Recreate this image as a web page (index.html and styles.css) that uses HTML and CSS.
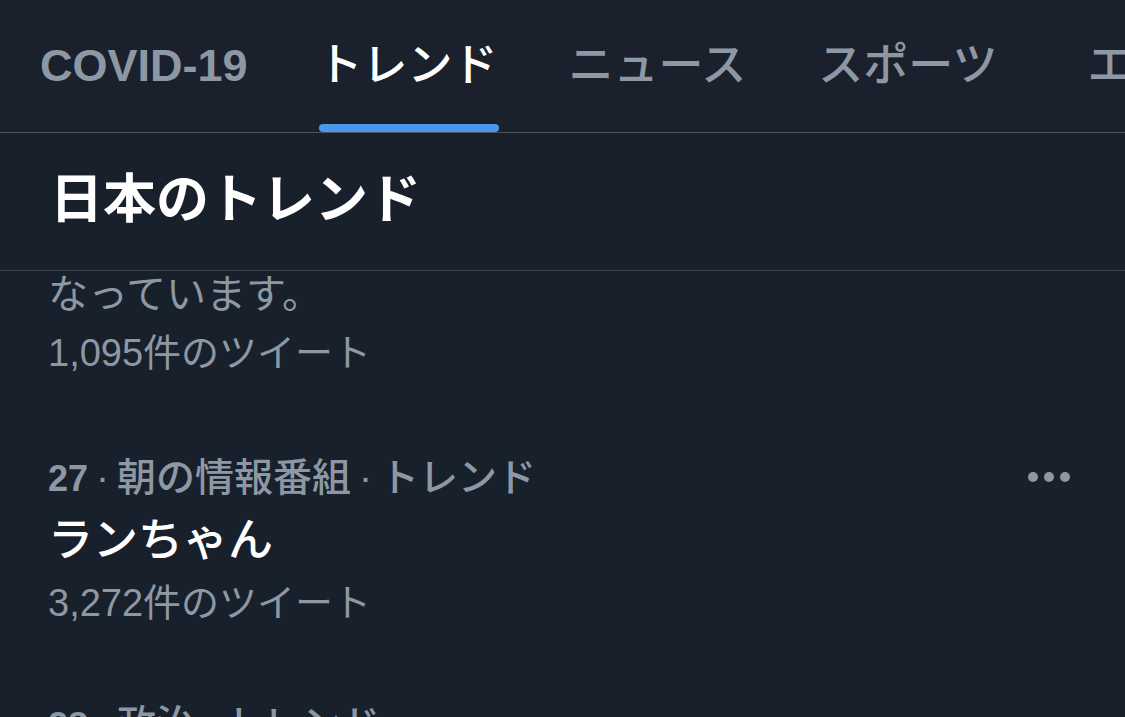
FILE: index.html
```html
<!DOCTYPE html>
<html lang="ja">
<head>
<meta charset="utf-8">
<title>トレンド</title>
<link rel="stylesheet" href="styles.css">
</head>
<body>
<div class="screen">
  <nav class="tabs">
    <div class="tab tab-latin">COVID-19</div>
    <div class="tab tab-active">トレンド<span class="indicator"></span></div>
    <div class="tab">ニュース</div>
    <div class="tab">スポーツ</div>
    <div class="tab tab-wide">エンタメ</div>
  </nav>
  <header class="section-head">
    <h1 class="section-title">日本のトレンド</h1>
  </header>
  <main class="list">
    <div class="trend trend-cut">
      <div class="desc">なっています。</div>
      <div class="count">1,095件のツイート</div>
    </div>
    <div class="trend">
      <div class="meta-row">
        <div class="meta"><span class="rank">27</span><span class="sep">·</span>朝の情報番組<span class="sep">·</span>トレンド</div>
        <div class="more"><span></span><span></span><span></span></div>
      </div>
      <div class="name">ランちゃん</div>
      <div class="count">3,272件のツイート</div>
    </div>
    <div class="trend">
      <div class="meta-row">
        <div class="meta"><span class="rank">28</span><span class="sep">·</span>政治<span class="sep">·</span>トレンド</div>
        <div class="more"><span></span><span></span><span></span></div>
      </div>
      <div class="name">サンプル</div>
    </div>
  </main>
</div>
</body>
</html>
```

FILE: styles.css
```css
* { box-sizing: border-box; margin: 0; padding: 0; }
html, body {
  width: 1125px;
  height: 717px;
  overflow: hidden;
  background: #18202b;
}
body {
  font-family: "Liberation Sans", "Noto Sans CJK JP", sans-serif;
  color: #ffffff;
}
.screen {
  display: flex;
  flex-direction: column;
  height: 717px;
  overflow: hidden;
}
.tabs {
  display: flex;
  flex-wrap: nowrap;
  height: 133px;
  padding-left: 5px;
  border-bottom: 1px solid #4a525c;
  background: #1a212c;
  overflow: hidden;
  flex-shrink: 0;
}
.tab {
  position: relative;
  flex-shrink: 0;
  padding: 38px 36px 0;
  font-size: 45px;
  line-height: 56px;
  font-weight: 500;
  color: #8d98a4;
  white-space: nowrap;
}
.tab-latin { font-weight: 700; padding-left: 35px; padding-right: 35px; }
.tab-active { color: #ffffff; padding-left: 35px; padding-right: 35px; }
.tab-wide { padding-left: 54px; }
.indicator {
  position: absolute;
  left: 36px;
  right: 34px;
  bottom: 0;
  height: 8px;
  border-radius: 4px;
  background: #4a99e9;
}
.section-head {
  height: 138px;
  display: flex;
  align-items: center;
  padding-left: 50px;
  border-bottom: 1px solid #3b444e;
  flex-shrink: 0;
}
.section-title {
  font-size: 53px;
  font-weight: 700;
  line-height: 60px;
  margin-top: -4px;
}
.list {
  display: flex;
  flex-direction: column;
}
.trend {
  padding: 0 48px 62px 48px;
  display: flex;
  flex-direction: column;
}
.trend-cut { margin-top: -6px; padding-bottom: 65px; }
.desc {
  font-size: 40px;
  line-height: 58px;
  color: #8d98a4;
}
.count {
  font-size: 38px;
  line-height: 60px;
  color: #8d98a4;
}
.meta-row {
  display: flex;
  justify-content: space-between;
  align-items: center;
}
.meta {
  font-size: 39px;
  line-height: 60px;
  font-weight: 500;
  color: #8d98a4;
}
.rank { font-weight: 700; font-size: 36px; }
.sep { margin: 0 8px; }
.more {
  display: flex;
  gap: 6px;
  margin-right: 7px;
  margin-top: -4px;
}
.more span {
  width: 10px;
  height: 10px;
  border-radius: 50%;
  background: #8d98a4;
}
.name {
  font-size: 45px;
  line-height: 64px;
  font-weight: 500;
  color: #ffffff;
}
```
